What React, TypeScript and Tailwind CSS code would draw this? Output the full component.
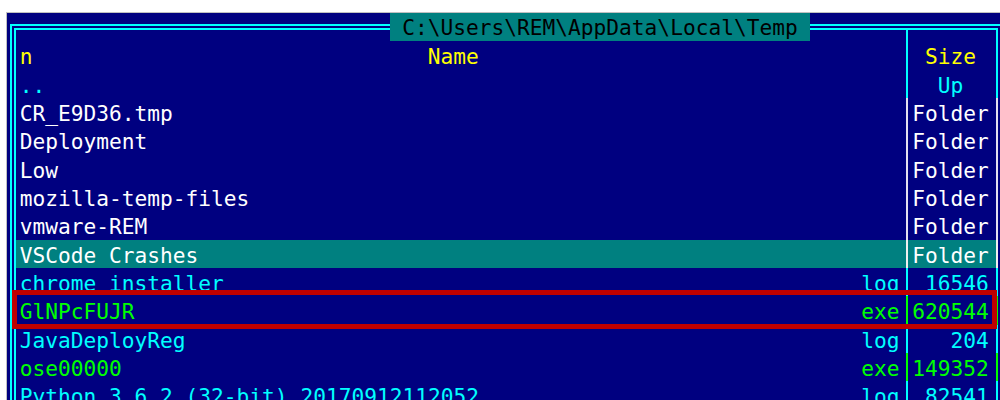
const CYAN = "bg-[#00ffff]";

type Row = {
  name: string;
  ext?: string;
  size: string;
  text: string;
  line: string;
  selected?: boolean;
};

// one console cell = 12.75 x 28.333 px
const rows: Row[] = [
  { name: "..", size: "Up", text: "text-[#00ffff]", line: "bg-[#00ffff]" },
  { name: "CR_E9D36.tmp", size: "Folder", text: "text-white", line: "bg-[#e4e0f0]" },
  { name: "Deployment", size: "Folder", text: "text-white", line: "bg-[#e4e0f0]" },
  { name: "Low", size: "Folder", text: "text-white", line: "bg-[#e4e0f0]" },
  { name: "mozilla-temp-files", size: "Folder", text: "text-white", line: "bg-[#e4e0f0]" },
  { name: "vmware-REM", size: "Folder", text: "text-white", line: "bg-[#e4e0f0]" },
  { name: "VSCode Crashes", size: "Folder", text: "text-white", line: "bg-[#f0f0f0]", selected: true },
  { name: "chrome installer", ext: "log", size: "16546", text: "text-[#00ffff]", line: "bg-[#00ffff]" },
  { name: "GlNPcFUJR", ext: "exe", size: "620544", text: "text-[#00ff00]", line: "bg-[#00ff00]" },
  { name: "JavaDeployReg", ext: "log", size: "204", text: "text-[#00ffff]", line: "bg-[#00ffff]" },
  { name: "ose00000", ext: "exe", size: "149352", text: "text-[#00ff00]", line: "bg-[#00ff00]" },
  { name: "Python 3.6.2 (32-bit) 20170912112052", ext: "log", size: "82541", text: "text-[#00ffff]", line: "bg-[#00ffff]" },
];

function HLines({ className }: { className: string }) {
  return (
    <div className={`pt-[11px] ${className}`}>
      <div className="border-t-2 border-[#00ffff] pt-[2px]">
        <div className="border-t-2 border-[#00ffff]" />
      </div>
    </div>
  );
}

function LeftEdge({ bg }: { bg: string }) {
  return (
    <div className="flex w-[12.75px] shrink-0">
      <div className="w-[3px]" />
      <div className={`w-[2px] ${CYAN}`} />
      <div className="w-[2px]" />
      <div className={`w-[2px] ${CYAN}`} />
      <div className={`flex-1 ${bg}`} />
    </div>
  );
}

function RightEdge({ bg, line }: { bg: string; line: string }) {
  return (
    <div className="flex w-[12.75px] shrink-0">
      <div className={`w-[7px] ${bg}`} />
      <div className={`w-[2px] ${line}`} />
    </div>
  );
}

function FileRow({ row }: { row: Row }) {
  const bg = row.selected ? "bg-[#008080]" : "";
  return (
    <div className={`flex h-[28.333px] leading-[28.333px] ${row.text}`}>
      <LeftEdge bg={bg} />
      <div className={`flex w-[879.75px] shrink-0 justify-between whitespace-pre pt-[2px] ${bg}`}>
        <span>{row.name}</span>
        <span>{row.ext ?? ""}</span>
      </div>
      <div className={`flex w-[12.75px] shrink-0 pl-[6px] ${bg}`}>
        <div className={`w-[2px] ${row.line}`} />
      </div>
      <div className={`w-[76.5px] shrink-0 whitespace-pre pt-[2px] ${row.size === "Up" ? "text-center" : "text-right"} ${bg}`}>
        {row.size}
      </div>
      <RightEdge bg={bg} line={row.line} />
    </div>
  );
}

export default function App() {
  return (
    <div className="relative h-[400px] w-[1000px] overflow-hidden bg-white pl-[6px] pt-[12px]">
      <div className="h-[400px] w-[1000px] border-l border-t border-[#c0c0c0] bg-[#000080] font-['DejaVu_Sans_Mono',monospace] text-[21.2px]">
        {/* frame top with path title */}
        <div className="flex h-[28.333px]">
          <div className="w-[12.75px] shrink-0 pl-[3px] pt-[11px]">
            <div className="h-full border-l-2 border-t-2 border-[#00ffff] pl-[2px] pt-[2px]">
              <div className="h-full border-l-2 border-t-2 border-[#00ffff]" />
            </div>
          </div>
          <HLines className="w-[369.75px] shrink-0" />
          <div className="w-[420.75px] shrink-0 whitespace-pre bg-[#008080] pt-[2px] leading-[26.333px] text-black">
            {" C:\\Users\\REM\\AppData\\Local\\Temp "}
          </div>
          <HLines className="w-[89.25px] shrink-0" />
          {/* column separator joint */}
          <div className="w-[12.75px] shrink-0 pt-[11px]">
            <div className="h-full border-t-2 border-[#00ffff] pt-[2px]">
              <div className="flex h-full border-t-2 border-[#00ffff] pl-[6px]">
                <div className={`w-[2px] ${CYAN}`} />
              </div>
            </div>
          </div>
          <HLines className="w-[76.5px] shrink-0" />
          <div className="w-[12.75px] shrink-0 pt-[11px]">
            <div className="h-full border-t-2 border-[#00ffff] pt-[2px]">
              <div className="h-full w-[9px] border-r-2 border-t-2 border-[#00ffff]" />
            </div>
          </div>
        </div>

        {/* column headers */}
        <div className="flex h-[28.333px] leading-[28.333px] text-[#ffff00]">
          <LeftEdge bg="" />
          <div className="flex w-[879.75px] shrink-0 whitespace-pre pt-[2px]">
            <span>n</span>
            <span className="ml-[395.25px]">Name</span>
          </div>
          <div className="flex w-[12.75px] shrink-0 pl-[6px]">
            <div className={`w-[2px] ${CYAN}`} />
          </div>
          <div className="w-[76.5px] shrink-0 pt-[2px] text-center">Size</div>
          <RightEdge bg="" line={CYAN} />
        </div>

        {rows.map((row) => (
          <FileRow key={row.name} row={row} />
        ))}
      </div>

      {/* red highlight box */}
      <div className="absolute left-[12px] top-[290px] h-[39px] w-[985px] border-[5px] border-[#c00000]" />
    </div>
  );
}
